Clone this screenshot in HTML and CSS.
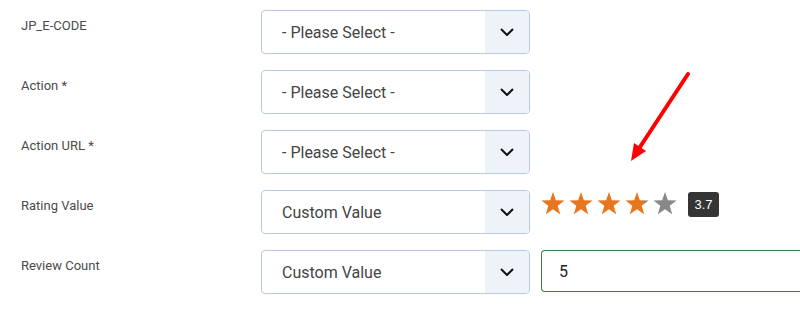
FILE: index.html
```html
<!DOCTYPE html>
<html>
<head>
<meta charset="utf-8">
<link rel="stylesheet" href="styles.css">
</head>
<body>
<div class="form">
  <div class="row">
    <div class="label">JP_E-CODE</div>
    <div class="select"><span class="select-text">- Please Select -</span><span class="select-btn"><svg width="14" height="8" viewBox="0 0 14 8"><polyline points="1,1 7,7 13,1" fill="none" stroke="#111" stroke-width="2"/></svg></span></div>
  </div>
  <div class="row">
    <div class="label">Action *</div>
    <div class="select"><span class="select-text">- Please Select -</span><span class="select-btn"><svg width="14" height="8" viewBox="0 0 14 8"><polyline points="1,1 7,7 13,1" fill="none" stroke="#111" stroke-width="2"/></svg></span></div>
  </div>
  <div class="row">
    <div class="label">Action URL *</div>
    <div class="select"><span class="select-text">- Please Select -</span><span class="select-btn"><svg width="14" height="8" viewBox="0 0 14 8"><polyline points="1,1 7,7 13,1" fill="none" stroke="#111" stroke-width="2"/></svg></span></div>
  </div>
  <div class="row">
    <div class="label">Rating Value</div>
    <div class="select"><span class="select-text">Custom Value</span><span class="select-btn"><svg width="14" height="8" viewBox="0 0 14 8"><polyline points="1,1 7,7 13,1" fill="none" stroke="#111" stroke-width="2"/></svg></span></div>
    <div class="rating">
      <div class="stars">
        <svg class="star" width="24" height="23" viewBox="0 0 24 23"><polygon points="12,0 14.9,8.3 23.6,8.5 16.7,13.8 19.2,22.2 12,17.2 4.8,22.2 7.3,13.8 0.4,8.5 9.1,8.3" fill="#e8761f"/></svg>
        <svg class="star" width="24" height="23" viewBox="0 0 24 23"><polygon points="12,0 14.9,8.3 23.6,8.5 16.7,13.8 19.2,22.2 12,17.2 4.8,22.2 7.3,13.8 0.4,8.5 9.1,8.3" fill="#e8761f"/></svg>
        <svg class="star" width="24" height="23" viewBox="0 0 24 23"><polygon points="12,0 14.9,8.3 23.6,8.5 16.7,13.8 19.2,22.2 12,17.2 4.8,22.2 7.3,13.8 0.4,8.5 9.1,8.3" fill="#e8761f"/></svg>
        <svg class="star" width="24" height="23" viewBox="0 0 24 23"><defs><linearGradient id="part" x1="0" x2="1" y1="0" y2="0"><stop offset="0.8" stop-color="#e8761f"/><stop offset="0.8" stop-color="#888"/></linearGradient></defs><polygon points="12,0 14.9,8.3 23.6,8.5 16.7,13.8 19.2,22.2 12,17.2 4.8,22.2 7.3,13.8 0.4,8.5 9.1,8.3" fill="url(#part)"/></svg>
        <svg class="star" width="24" height="23" viewBox="0 0 24 23"><polygon points="12,0 14.9,8.3 23.6,8.5 16.7,13.8 19.2,22.2 12,17.2 4.8,22.2 7.3,13.8 0.4,8.5 9.1,8.3" fill="#888"/></svg>
      </div>
      <span class="badge">3.7</span>
    </div>
  </div>
  <div class="row">
    <div class="label">Review Count</div>
    <div class="select"><span class="select-text">Custom Value</span><span class="select-btn"><svg width="14" height="8" viewBox="0 0 14 8"><polyline points="1,1 7,7 13,1" fill="none" stroke="#111" stroke-width="2"/></svg></span></div>
    <div class="input">5</div>
  </div>
</div>
<svg class="annotation" width="800" height="314" viewBox="0 0 800 314">
  <line x1="688" y1="74" x2="638" y2="150" stroke="#ff0000" stroke-width="4" stroke-linecap="round"/>
  <polygon points="631,161 646,151 634,143" fill="#ff0000"/>
</svg>
</body>
</html>
```

FILE: styles.css
```css
html, body {
  margin: 0;
  padding: 0;
  background: #ffffff;
  overflow: hidden;
}
body {
  position: relative;
  width: 800px;
  height: 314px;
  overflow: hidden;
  font-family: Roboto, "Liberation Sans", Arial, sans-serif;
}
.form {
  display: flex;
  flex-direction: column;
  gap: 16px;
  padding: 10px 0 0 21px;
}
.row {
  display: flex;
  align-items: flex-start;
  height: 44px;
}
.label {
  width: 240px;
  flex: none;
  font-size: 13px;
  line-height: 16px;
  padding-top: 8px;
  color: #4a4a4a;
}
.select {
  width: 267px;
  height: 42px;
  flex: none;
  display: flex;
  border: 1px solid #b8cae3;
  border-radius: 4px;
  overflow: hidden;
  background: #fff;
}
.select-text {
  flex: 1;
  display: flex;
  align-items: center;
  padding-left: 20px;
  font-size: 16px;
  color: #444;
}
.select-btn {
  width: 44px;
  flex: none;
  background: #eef3fa;
  display: flex;
  align-items: center;
  justify-content: center;
}
.rating {
  display: flex;
  align-items: flex-start;
  margin-left: 11px;
  margin-top: 2px;
}
.stars {
  display: flex;
  gap: 4px;
}
.star {
  display: block;
}
.badge {
  margin-left: 11px;
  width: 31px;
  height: 25px;
  background: #353535;
  border-radius: 3px;
  color: #fff;
  font-family: "Liberation Sans", Arial, sans-serif;
  font-size: 13px;
  display: flex;
  align-items: center;
  justify-content: center;
}
.input {
  margin-left: 11px;
  width: 241px;
  height: 40px;
  flex: none;
  border: 1px solid #3c7c47;
  border-right: none;
  border-radius: 4px 0 0 4px;
  padding-left: 17px;
  font-size: 16px;
  color: #222;
  display: flex;
  align-items: center;
}
.annotation {
  position: absolute;
  left: 0;
  top: 0;
  pointer-events: none;
}
```
